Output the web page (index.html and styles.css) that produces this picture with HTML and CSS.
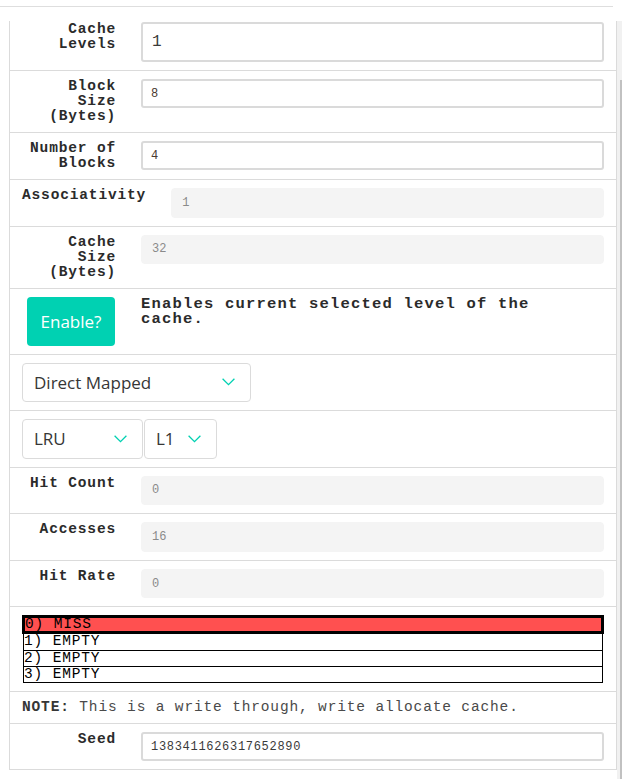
FILE: index.html
```html
<!DOCTYPE html>
<html>
<head>
<meta charset="utf-8">
<link rel="stylesheet" href="styles.css">
</head>
<body>
<div class="topline"></div>
<div class="frame">
  <div class="panel">
    <div class="row row-first">
      <div class="label">Cache Levels</div>
      <div class="field"><input class="inp inp-lg" value="1" readonly></div>
    </div>
    <div class="row">
      <div class="label">Block Size (Bytes)</div>
      <div class="field"><input class="inp" value="8" readonly></div>
    </div>
    <div class="row">
      <div class="label">Number of Blocks</div>
      <div class="field"><input class="inp" value="4" readonly></div>
    </div>
    <div class="row">
      <div class="label label-left">Associativity</div>
      <div class="field"><input class="inp inp-off" value="1" disabled></div>
    </div>
    <div class="row">
      <div class="label">Cache Size (Bytes)</div>
      <div class="field"><input class="inp inp-off" value="32" disabled></div>
    </div>
    <div class="row">
      <div class="label label-btn"><button class="btn">Enable?</button></div>
      <div class="field"><p class="hint">Enables current selected level of the cache.</p></div>
    </div>
    <div class="row row-sel">
      <div class="select sel-map"><span>Direct Mapped</span><svg class="chev" width="13" height="8" viewBox="0 0 13 8"><polyline points="0.6,0.8 6.5,6.7 12.4,0.8"/></svg></div>
    </div>
    <div class="row row-sel">
      <div class="sel-group">
        <div class="select sel-policy"><span>LRU</span><svg class="chev" width="13" height="8" viewBox="0 0 13 8"><polyline points="0.6,0.8 6.5,6.7 12.4,0.8"/></svg></div>
        <div class="select sel-level"><span>L1</span><svg class="chev" width="13" height="8" viewBox="0 0 13 8"><polyline points="0.6,0.8 6.5,6.7 12.4,0.8"/></svg></div>
      </div>
    </div>
    <div class="row">
      <div class="label">Hit Count</div>
      <div class="field"><input class="inp inp-off" value="0" disabled></div>
    </div>
    <div class="row">
      <div class="label">Accesses</div>
      <div class="field"><input class="inp inp-off" value="16" disabled></div>
    </div>
    <div class="row">
      <div class="label">Hit Rate</div>
      <div class="field"><input class="inp inp-off" value="0" disabled></div>
    </div>
    <div class="row row-list">
      <div class="slots">
        <div class="slot slot-sel">0) MISS</div>
        <div class="slot">1) EMPTY</div>
        <div class="slot">2) EMPTY</div>
        <div class="slot slot-last">3) EMPTY</div>
      </div>
    </div>
    <div class="row row-note">
      <p class="note"><b>NOTE:</b> This is a write through, write allocate cache.</p>
    </div>
    <div class="row row-last">
      <div class="label">Seed</div>
      <div class="field"><input class="inp inp-seed" value="1383411626317652890" readonly></div>
    </div>
  </div>
  <div class="scrollbar"><div class="thumb"></div></div>
</div>
</body>
</html>
```

FILE: styles.css
```css
html, body {
  margin: 0;
  padding: 0;
  background: #fff;
}

body {
  font-family: "Liberation Mono", "Courier New", monospace;
  color: #363636;
}

.topline {
  margin-top: 6px;
  width: 613px;
  height: 1px;
  background: #dedede;
}

.frame {
  display: flex;
  align-items: flex-start;
  margin-top: 14px;
}

.panel {
  margin-left: 9px;
  width: 608px;
  box-sizing: border-box;
  border: 1px solid #dbdbdb;
  border-top: none;
}

.scrollbar {
  width: 5px;
  height: calc(100vh - 21px);
  background: #f1f1f1;
  display: flex;
  flex-direction: column;
}

.thumb {
  flex: 1;
  margin-top: 59px;
  margin-left: 3px;
  background: #c1c1c1;
}

.row {
  display: flex;
  align-items: flex-start;
  gap: 25px;
  padding: 8px 12px;
  border-bottom: 1px solid #dbdbdb;
}

.row-first {
  padding-top: 1px;
}

.row-last {
  border-bottom: none;
}

.label {
  flex: 0 0 94px;
  text-align: right;
  font-weight: bold;
  font-size: 14.5px;
  line-height: 15px;
  letter-spacing: 0.85px;
  color: #2b2b2b;
}

.label-left {
  text-align: left;
}

.label-btn {
  display: flex;
  justify-content: flex-end;
  padding-right: 1px;
  box-sizing: border-box;
}

.field {
  flex: 1;
  min-width: 0;
}

.inp {
  display: block;
  width: 100%;
  box-sizing: border-box;
  height: 29px;
  margin: 0;
  border: 2px solid #dadada;
  border-radius: 3px;
  padding: 0 8px;
  background: #fff;
  font-family: "Liberation Mono", "Courier New", monospace;
  font-size: 12px;
  color: #4a3a30;
  outline: none;
}

.inp-lg {
  height: 40px;
  font-size: 16px;
  padding: 0 9px;
  color: #3a3a3a;
}

.inp-off {
  height: 29.6px;
  border: 1px solid #f4f4f4;
  border-radius: 4px;
  padding: 0 10px;
  background: #f4f4f4;
  color: #8a8a8a;
}

.inp-seed {
  letter-spacing: 0.7px;
  color: #3a3a3a;
}

.btn {
  width: 88px;
  height: 49px;
  border: none;
  border-radius: 4px;
  background: #00d1b2;
  color: #fff;
  font-family: "Open Sans", "Noto Sans", sans-serif;
  font-size: 17px;
  padding: 0;
  display: flex;
  align-items: center;
  justify-content: center;
}

.hint {
  margin: 0;
  padding-right: 12px;
  font-weight: bold;
  font-size: 15.5px;
  line-height: 15px;
  letter-spacing: 1.2px;
  color: #2b2b2b;
}

.row-sel {
  padding-top: 8px;
  padding-bottom: 8px;
}

.sel-group {
  display: flex;
  gap: 1px;
}

.select {
  display: flex;
  align-items: center;
  justify-content: space-between;
  box-sizing: border-box;
  height: 39.5px;
  border: 1px solid #dbdbdb;
  border-radius: 4px;
  padding: 0 15px 0 11px;
  font-family: "Open Sans", "Noto Sans", sans-serif;
  font-size: 17px;
  color: #363636;
}

.sel-map {
  width: 229px;
}

.sel-policy {
  width: 121px;
}

.sel-level {
  width: 73px;
}

.chev {
  display: block;
  flex: none;
}

.chev polyline {
  fill: none;
  stroke: #00d1b2;
  stroke-width: 1.3;
}

.row-list {
  padding-left: 13px;
  padding-right: 13px;
}

.slots {
  flex: 1;
  font-size: 14.5px;
  letter-spacing: 0.85px;
  color: #000;
}

.slot {
  height: 15px;
  line-height: 15px;
  border: 1px solid #000;
  border-bottom: none;
  white-space: pre;
}

.slot-last {
  border-bottom: 1px solid #000;
}

.slot-sel {
  height: 13px;
  line-height: 13px;
  border: 3px solid #000;
  margin: 0 -1px;
  background: #ff5050;
}

.slot-sel + .slot {
  border-top: none;
  height: 16px;
}

.note {
  margin: 0;
  font-size: 14.5px;
  line-height: 15px;
  letter-spacing: 0.85px;
  color: #4a4a4a;
}

.note b {
  color: #363636;
}
```
